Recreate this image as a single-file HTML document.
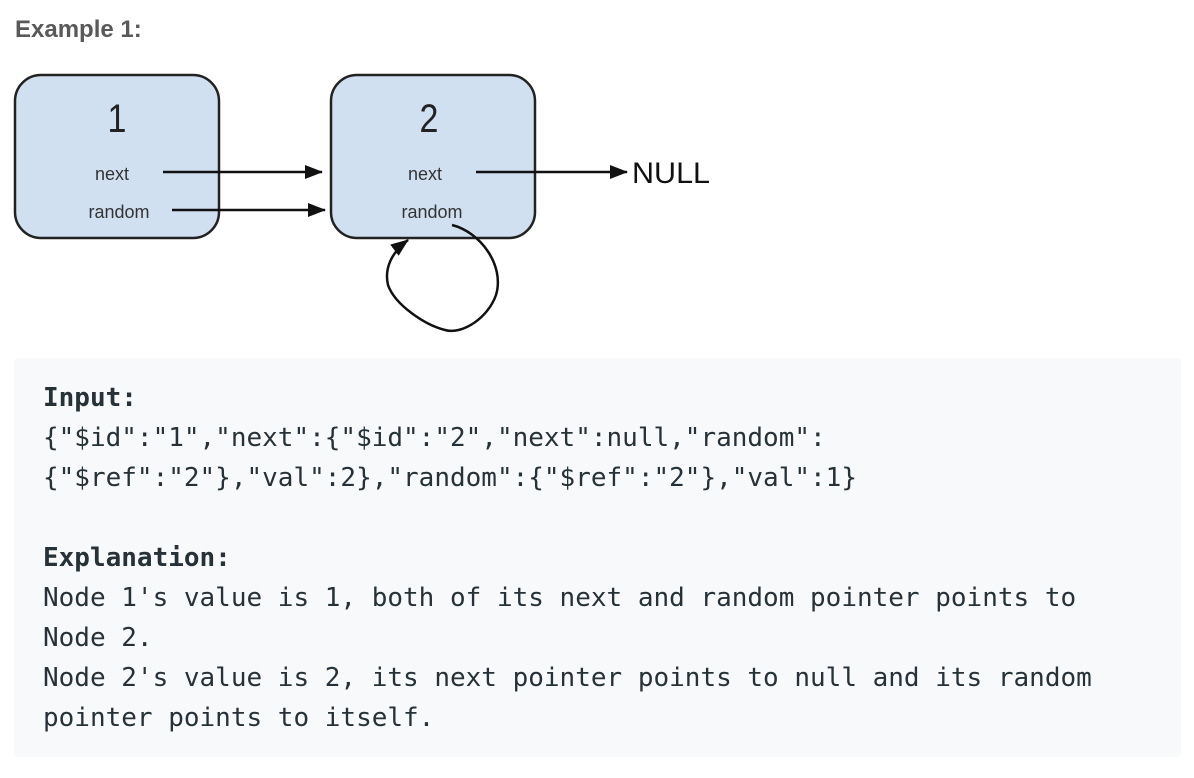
<!DOCTYPE html>
<html><head><meta charset="utf-8"><style>
body{margin:0;width:1194px;height:778px;background:#fff;overflow:hidden;}
h3{position:absolute;left:15px;top:16px;margin:0;font:bold 24px "Liberation Sans",sans-serif;color:#595959;}
pre{position:absolute;left:14px;top:358px;width:1138px;height:361px;margin:0;padding:20px 0 18px 29px;background:#f7f9fa;border-radius:4px;font:26px/40px "DejaVu Sans Mono",monospace;color:#263238;white-space:pre;}
b{font-weight:bold;}
svg{position:absolute;left:0;top:0;}
</style></head><body>
<h3>Example 1:</h3>
<svg width="760" height="340" font-family="Liberation Sans, sans-serif">
<defs>
<marker id="b" markerWidth="18" markerHeight="14" refX="17" refY="7" orient="auto" markerUnits="userSpaceOnUse"><path d="M0,0L18,7L0,14z" fill="#111"/></marker></defs>
<rect x="15" y="75" width="204" height="163" rx="26" fill="#d0e0f0" stroke="#222" stroke-width="2.5"/>
<rect x="331" y="75" width="204" height="163" rx="26" fill="#d0e0f0" stroke="#222" stroke-width="2.5"/>
<text x="117" y="132" font-size="40" text-anchor="middle" fill="#222" transform="translate(117 0) scale(0.85 1) translate(-117 0)">1</text>
<text x="429" y="132" font-size="40" text-anchor="middle" fill="#222" transform="translate(429 0) scale(0.85 1) translate(-429 0)">2</text>
<text x="112" y="180" font-size="18" text-anchor="middle" fill="#333">next</text>
<text x="119" y="218" font-size="18" text-anchor="middle" fill="#333">random</text>
<text x="425" y="180" font-size="18" text-anchor="middle" fill="#333">next</text>
<text x="432" y="218" font-size="18" text-anchor="middle" fill="#333">random</text>
<line x1="163" y1="172" x2="322" y2="172" stroke="#111" stroke-width="2.5" marker-end="url(#b)"/>
<line x1="172" y1="210" x2="325" y2="210" stroke="#111" stroke-width="2.5" marker-end="url(#b)"/>
<line x1="476" y1="172" x2="627" y2="172" stroke="#111" stroke-width="2.5" marker-end="url(#b)"/>
<text x="632" y="183" font-size="30" fill="#111" textLength="78" lengthAdjust="spacingAndGlyphs">NULL</text>
<path d="M452,225 C480,232 505,265 496,295 C488,318 462,335 445,330 C425,325 395,305 388,285 C384,268 392,252 408,240" fill="none" stroke="#111" stroke-width="2.5" marker-end="url(#b)"/>
</svg>
<pre><b>Input:</b>
{"$id":"1","next":{"$id":"2","next":null,"random":
{"$ref":"2"},"val":2},"random":{"$ref":"2"},"val":1}

<b>Explanation:</b>
Node 1's value is 1, both of its next and random pointer points to
Node 2.
Node 2's value is 2, its next pointer points to null and its random
pointer points to itself.</pre>
</body></html>
